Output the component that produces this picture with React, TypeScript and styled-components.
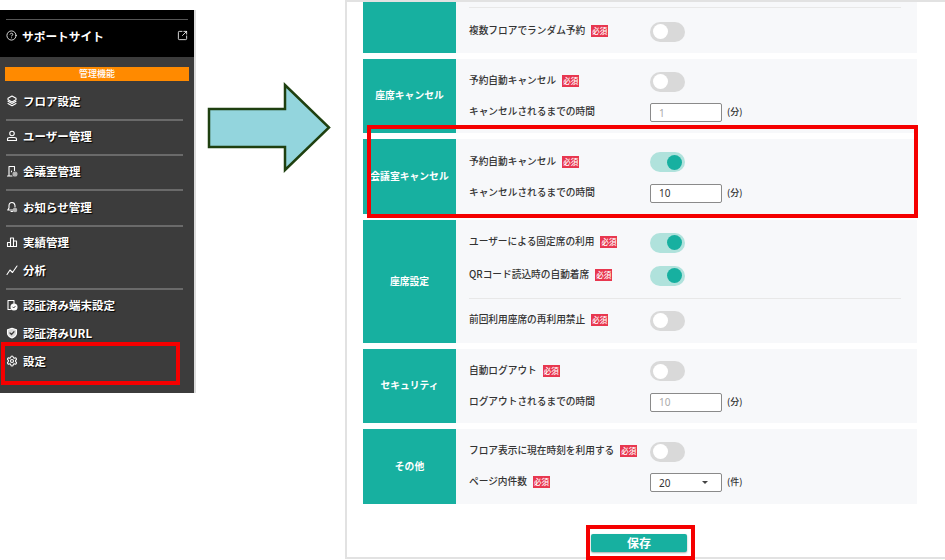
import React from "react";
import styled, { createGlobalStyle } from "styled-components";
import { CircleHelp, Settings, SquareArrowOutUpRight } from "lucide-react";

const GlobalStyle = createGlobalStyle`
  html, body {
    margin: 0;
    background: #fff;
    font-family: "Noto Sans CJK JP", "Noto Sans", sans-serif;
  }
`;

const Page = styled.div`
  position: relative;
  display: flex;
  align-items: flex-start;
  width: 945px;
  height: 560px;
  overflow: hidden;
`;

const Sidebar = styled.nav`
  flex: none;
  width: 194px;
  height: 383px;
  margin-top: 10px;
  background: #3c3c3c;
  box-shadow: 2px 0 0 #dcdcdc;
  color: #fff;
`;

const SupportHeader = styled.div`
  height: 47px;
  padding: 9px 6px 0;
  box-sizing: border-box;
  background: #000;
`;

const SupportLine = styled.div`
  height: 1px;
  background: #555;
`;

const SupportRow = styled.div`
  display: flex;
  align-items: center;
  gap: 5px;
  height: 30px;
  font-size: 11.7px;
  font-weight: 700;
  svg:last-child {
    margin-left: auto;
  }
`;

const AdminBar = styled.div`
  height: 14px;
  margin: 10px 5px 6px;
  background: #ff8a00;
  font-size: 9px;
  font-weight: 500;
  line-height: 14px;
  text-align: center;
`;

const NavItem = styled.div`
  display: flex;
  align-items: center;
  gap: 5px;
  height: 28px;
  padding-left: 6px;
  font-size: 11.5px;
  font-weight: 700;
  text-shadow: 1px 1px 1px #000;
`;

const NavDivider = styled.div`
  height: 2px;
  margin: 4px 11px 1.2px 6px;
  background: #6a6a6a;
`;

const ArrowSlot = styled.div`
  flex: none;
  width: 151px;
  padding: 82px 0 0 13px;
  box-sizing: border-box;
`;

const Panel = styled.main`
  flex: none;
  width: 600px;
  height: 559px;
  box-sizing: border-box;
  padding: 0 28px 0 16px;
  border: solid #e2e2e2;
  border-width: 2px 0 2px 2px;
`;

const Sections = styled.div`
  display: flex;
  flex-direction: column;
  gap: 6px;
`;

const Section = styled.section<{ $height: number }>`
  display: flex;
  height: ${(p) => p.$height}px;
  background: #f7f8fa;
`;

const SectionLabel = styled.h3`
  flex: none;
  display: flex;
  align-items: center;
  justify-content: center;
  width: 93px;
  margin: 0 2px 0 0;
  padding-bottom: 2px;
  box-sizing: border-box;
  background: #17b0a0;
  color: #fff;
  font-size: 9.8px;
  font-weight: 700;
`;

const SectionBody = styled.div<{ $top: number }>`
  flex: 1;
  padding: ${(p) => p.$top}px 16px 0 11px;
`;

const Rule = styled.div<{ $above: number; $below: number }>`
  height: 1px;
  margin: ${(p) => p.$above}px 0 ${(p) => p.$below}px;
  background: #e8e8e8;
`;

const Field = styled.div<{ $tall?: boolean }>`
  display: grid;
  grid-template-columns: 181px 1fr;
  align-items: center;
  height: 31px;
  margin-top: ${(p) => (p.$tall ? 2 : 0)}px;
`;

const FieldName = styled.div`
  display: flex;
  align-items: center;
  gap: 6px;
  padding-bottom: 1px;
  color: #333;
  font-size: 9.7px;
  font-weight: 500;
  white-space: nowrap;
`;

const Required = styled.span`
  width: 17px;
  height: 12px;
  margin-top: 2px;
  background: #e8374f;
  color: #fff;
  font-size: 7.5px;
  font-weight: 500;
  line-height: 12px;
  text-align: center;
`;

const Control = styled.div`
  display: flex;
  align-items: center;
  gap: 5px;
  padding-top: 2.5px;
`;

const Track = styled.span<{ $on?: boolean }>`
  display: flex;
  align-items: center;
  justify-content: ${(p) => (p.$on ? "flex-end" : "flex-start")};
  width: 35px;
  height: 20px;
  padding: 0 3px;
  box-sizing: border-box;
  border-radius: 10px;
  background: ${(p) => (p.$on ? "#b0e2dc" : "#d9d9d9")};
`;

const Thumb = styled.span<{ $on?: boolean }>`
  width: 15px;
  height: 15px;
  border-radius: 50%;
  background: ${(p) => (p.$on ? "#17b0a0" : "#fff")};
`;

const NumberInput = styled.input`
  width: 72px;
  height: 19px;
  padding: 0 8px;
  box-sizing: border-box;
  border: 1px solid #8a8a8a;
  border-radius: 2px;
  background: #fff;
  color: #333;
  font: 400 10px "Noto Sans", sans-serif;
  outline: none;
  &:disabled {
    color: #aaa;
  }
`;

const SelectBox = styled.div`
  display: flex;
  align-items: center;
  justify-content: space-between;
  width: 72px;
  height: 19px;
  padding: 0 13px 0 8px;
  box-sizing: border-box;
  border: 1px solid #8a8a8a;
  border-radius: 2px;
  background: #fff;
  color: #333;
  font: 400 10px "Noto Sans", sans-serif;
`;

const Caret = styled.span`
  border: 3px solid transparent;
  border-top-color: #444;
  border-bottom-width: 0;
`;

const Unit = styled.span`
  margin-top: -2px;
  color: #333;
  font-size: 9px;
  font-weight: 500;
`;

const SaveRow = styled.div`
  display: flex;
  justify-content: center;
  margin-top: 30px;
  padding-right: 2px;
`;

const SaveButton = styled.button`
  width: 96px;
  height: 18px;
  padding: 0;
  border: 0;
  border-radius: 2px;
  background: #17b0a0;
  box-shadow: 0 1px 2px #aaa;
  color: #fff;
  font-family: inherit;
  font-size: 12px;
  font-weight: 700;
  line-height: 18px;
`;

const Highlight = styled.div<{ $x: number; $y: number; $w: number; $h: number }>`
  position: absolute;
  left: ${(p) => p.$x}px;
  top: ${(p) => p.$y}px;
  width: ${(p) => p.$w}px;
  height: ${(p) => p.$h}px;
  box-sizing: border-box;
  border: 4px solid #f50000;
`;

const NavIcon = ({ children }: { children: React.ReactNode }) => (
  <svg
    width="12"
    height="12"
    viewBox="0 0 24 24"
    fill="none"
    stroke="#fff"
    strokeWidth="2.2"
    strokeLinejoin="round"
    strokeLinecap="round"
  >
    {children}
  </svg>
);

const LayersIcon = () => (
  <NavIcon>
    <path d="M12 2l8 4.500v3L12 14 4 9.500v-3Z" />
    <path d="M4 12.500L12 17l8-4.500" />
    <path d="M4 17l8 4.500 8-4.500" />
  </NavIcon>
);

const UserIcon = () => (
  <NavIcon>
    <circle cx="12" cy="7" r="4.500" />
    <path d="M3 21v-2.500c0-2 2-3.500 4.500-3.500h9c2.500 0 4.500 1.500 4.500 3.500V21Z" />
  </NavIcon>
);

const RoomIcon = () => (
  <NavIcon>
    <path d="M6 22V3h11v8M3 22h9M11 12v1.500" />
    <circle cx="18" cy="18" r="4" fill="#b5b5b5" stroke="#b5b5b5" />
  </NavIcon>
);

const BellIcon = () => (
  <NavIcon>
    <path d="M12 3c-4 0-6 3-6 6.500V14l-2.500 4h13" />
    <path d="M12 3c3.500 0 5.500 2.500 6 6v3" />
    <path d="M10 21h3" />
    <circle cx="18" cy="18" r="3.500" fill="#b5b5b5" stroke="#b5b5b5" />
  </NavIcon>
);

const ResultsIcon = () => (
  <NavIcon>
    <path d="M3 21v-8h6V4h6v6h6v11Z" />
    <path d="M9 13v8M15 10v11" />
  </NavIcon>
);

const TrendIcon = () => (
  <NavIcon>
    <path d="M2 21l6-9 5 5 9-13" />
  </NavIcon>
);

const DeviceIcon = () => (
  <NavIcon>
    <path d="M9 21H4V3h12v6" />
    <circle cx="16" cy="16" r="6" fill="#fff" />
    <path d="M13.500 16l2 2 3-3.500" stroke="#3c3c3c" strokeWidth="1.800" />
  </NavIcon>
);

const ShieldIcon = () => (
  <NavIcon>
    <path d="M12 2.500l9 3v7c0 4.500-4 7.500-9 9.500-5-2-9-5-9-9.500v-7Z" fill="#d8d8d8" />
    <path d="M8 12l3 3 5-5.500" stroke="#3c3c3c" strokeWidth="2.400" />
  </NavIcon>
);

const BigArrow = () => (
  <svg width="124" height="92" viewBox="0 0 124 92">
    <path
      d="M2 27H78V3L122 45.500 78 88V65H2Z"
      fill="#93d5dd"
      stroke="#1f4010"
      strokeWidth="2.500"
    />
  </svg>
);

const Toggle = ({ on }: { on?: boolean }) => (
  <Track $on={on}>
    <Thumb $on={on} />
  </Track>
);

const Row = ({
  name,
  required,
  tall,
  children,
}: {
  name: string;
  required?: boolean;
  tall?: boolean;
  children: React.ReactNode;
}) => (
  <Field $tall={tall}>
    <FieldName>
      {name}
      {required && <Required>必須</Required>}
    </FieldName>
    <Control>{children}</Control>
  </Field>
);

export default function App() {
  return (
    <Page>
      <GlobalStyle />
      <Sidebar>
        <SupportHeader>
          <SupportLine />
          <SupportRow>
            <CircleHelp size={11} strokeWidth={1.8} />
            サポートサイト
            <SquareArrowOutUpRight size={11} strokeWidth={1.8} />
          </SupportRow>
        </SupportHeader>
        <AdminBar>管理機能</AdminBar>
        <NavItem>
          <LayersIcon />
          フロア設定
        </NavItem>
        <NavDivider />
        <NavItem>
          <UserIcon />
          ユーザー管理
        </NavItem>
        <NavDivider />
        <NavItem>
          <RoomIcon />
          会議室管理
        </NavItem>
        <NavDivider />
        <NavItem>
          <BellIcon />
          お知らせ管理
        </NavItem>
        <NavDivider />
        <NavItem>
          <ResultsIcon />
          実績管理
        </NavItem>
        <NavItem>
          <TrendIcon />
          分析
        </NavItem>
        <NavDivider />
        <NavItem>
          <DeviceIcon />
          認証済み端末設定
        </NavItem>
        <NavItem>
          <ShieldIcon />
          認証済みURL
        </NavItem>
        <NavItem>
          <Settings size={12} strokeWidth={2.2} />
          設定
        </NavItem>
      </Sidebar>

      <ArrowSlot>
        <BigArrow />
      </ArrowSlot>

      <Panel>
        <Sections>
          <Section $height={51}>
            <SectionLabel />
            <SectionBody $top={5}>
              <Rule $above={0} $below={7} />
              <Row name="複数フロアでランダム予約" required>
                <Toggle />
              </Row>
            </SectionBody>
          </Section>

          <Section $height={74}>
            <SectionLabel>座席キャンセル</SectionLabel>
            <SectionBody $top={6}>
              <Row name="予約自動キャンセル" required>
                <Toggle />
              </Row>
              <Row name="キャンセルされるまでの時間">
                <NumberInput disabled defaultValue="1" />
                <Unit>(分)</Unit>
              </Row>
            </SectionBody>
          </Section>

          <Section $height={75}>
            <SectionLabel>会議室キャンセル</SectionLabel>
            <SectionBody $top={6.5}>
              <Row name="予約自動キャンセル" required>
                <Toggle on />
              </Row>
              <Row name="キャンセルされるまでの時間">
                <NumberInput defaultValue="10" />
                <Unit>(分)</Unit>
              </Row>
            </SectionBody>
          </Section>

          <Section $height={123}>
            <SectionLabel>座席設定</SectionLabel>
            <SectionBody $top={6}>
              <Row name="ユーザーによる固定席の利用" required>
                <Toggle on />
              </Row>
              <Row name="QRコード読込時の自動着席" required tall>
                <Toggle on />
              </Row>
              <Rule $above={8} $below={5} />
              <Row name="前回利用座席の再利用禁止" required>
                <Toggle />
              </Row>
            </SectionBody>
          </Section>

          <Section $height={74}>
            <SectionLabel>セキュリティ</SectionLabel>
            <SectionBody $top={5.5}>
              <Row name="自動ログアウト" required>
                <Toggle />
              </Row>
              <Row name="ログアウトされるまでの時間">
                <NumberInput disabled defaultValue="10" />
                <Unit>(分)</Unit>
              </Row>
            </SectionBody>
          </Section>

          <Section $height={75}>
            <SectionLabel>その他</SectionLabel>
            <SectionBody $top={6}>
              <Row name="フロア表示に現在時刻を利用する" required>
                <Toggle />
              </Row>
              <Row name="ページ内件数" required>
                <SelectBox>
                  20
                  <Caret />
                </SelectBox>
                <Unit>(件)</Unit>
              </Row>
            </SectionBody>
          </Section>
        </Sections>

        <SaveRow>
          <SaveButton>保存</SaveButton>
        </SaveRow>
      </Panel>

      <Highlight $x={1} $y={342} $w={179} $h={43} />
      <Highlight $x={367} $y={125} $w={551} $h={93} />
      <Highlight $x={586} $y={525} $w={109} $h={35} />
    </Page>
  );
}
